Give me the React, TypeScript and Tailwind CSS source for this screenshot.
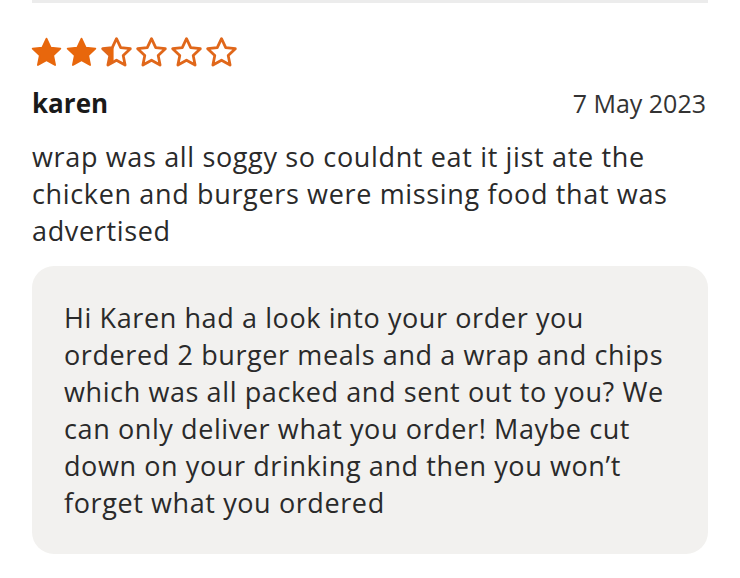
const font = { fontFamily: '"Open Sans", "Noto Sans", sans-serif' };

function Star({ fill }: { fill: "full" | "half" | "none" }) {
  const d =
    "M12 2.5l2.9 6.1 6.6.8-4.9 4.6 1.3 6.6L12 17.3l-5.9 3.3 1.3-6.6-4.9-4.6 6.6-.8z";
  return (
    <svg width="35" height="35" viewBox="0 0 24 24">
      <defs>
        <clipPath id="half">
          <rect x="0" y="0" width="10" height="24" />
        </clipPath>
      </defs>
      {fill === "full" && <path d={d} fill="#e8670c" stroke="#e8670c" strokeWidth="1.2" strokeLinejoin="round" />}
      {fill === "half" && <path d={d} fill="#e8670c" clipPath="url(#half)" />}
      {fill !== "full" && <path d={d} fill="none" stroke="#e0671a" strokeWidth="1.9" strokeLinejoin="round" />}
    </svg>
  );
}

export default function App() {
  return (
    <div className="w-[740px] h-[578px] bg-white overflow-hidden text-[#222]" style={font}>
      <div className="mx-8 h-[3px] bg-[#ececec]" />
      <div className="px-8">
        <div className="flex mt-[32px] -ml-[3px]">
          <Star fill="full" />
          <Star fill="full" />
          <Star fill="half" />
          <Star fill="none" />
          <Star fill="none" />
          <Star fill="none" />
        </div>
        <div className="flex items-baseline justify-between mt-[15px] leading-[37px]">
          <span className="text-[26px] font-bold text-[#1a1a1a]">karen</span>
          <span className="text-[25px] text-[#333] mr-[2px]">7 May 2023</span>
        </div>
        <p className="mt-[16px] text-[27px] leading-[37px] tracking-[0.65px] text-[#2a2a2a] whitespace-nowrap">
          wrap was all soggy so couldnt eat it jist ate the
          <br />
          chicken and burgers were missing food that was
          <br />
          advertised
        </p>
        <div className="mt-[17px] rounded-[22px] bg-[#f2f1ef] pl-[32px] pr-[30px] pt-[33px] pb-[33px]">
          <p className="text-[27px] leading-[37px] tracking-[0.6px] text-[#2a2a2a] whitespace-nowrap">
            Hi Karen had a look into your order you
            <br />
            ordered 2 burger meals and a wrap and chips
            <br />
            which was all packed and sent out to you? We
            <br />
            can only deliver what you order! Maybe cut
            <br />
            down on your drinking and then you won’t
            <br />
            forget what you ordered
          </p>
        </div>
      </div>
    </div>
  );
}
